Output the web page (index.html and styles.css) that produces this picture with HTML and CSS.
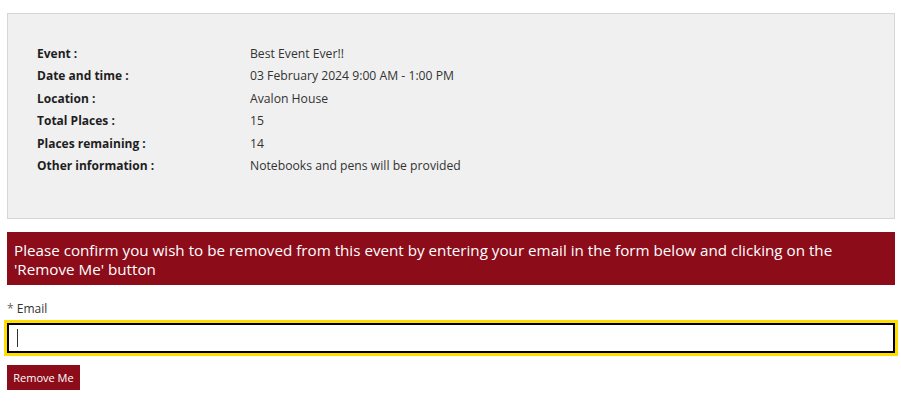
FILE: index.html
```html
<!DOCTYPE html>
<html lang="en">
<head>
<meta charset="utf-8">
<title>Remove from event</title>
<link rel="stylesheet" href="styles.css">
</head>
<body>
<div class="page">
  <div class="details">
    <div class="row"><span class="label">Event :</span><span class="value">Best Event Ever!!</span></div>
    <div class="row"><span class="label">Date and time :</span><span class="value">03 February 2024 9:00 AM - 1:00 PM</span></div>
    <div class="row"><span class="label">Location :</span><span class="value">Avalon House</span></div>
    <div class="row"><span class="label">Total Places :</span><span class="value">15</span></div>
    <div class="row"><span class="label">Places remaining :</span><span class="value">14</span></div>
    <div class="row"><span class="label">Other information :</span><span class="value">Notebooks and pens will be provided</span></div>
  </div>
  <div class="banner">Please confirm you wish to be removed from this event by entering your email in the form below and clicking on the 'Remove Me' button</div>
  <form class="form">
    <label class="field-label" for="email"><span class="req">*</span> Email</label>
    <div class="input-wrap"><input class="input" id="email" type="text" autofocus><span class="caret"></span></div>
    <div><button class="btn" type="button">Remove Me</button></div>
  </form>
</div>
</body>
</html>
```
FILE: styles.css
```css
* { box-sizing: border-box; }
body {
  margin: 0;
  font-family: "Open Sans", "Noto Sans", sans-serif;
  color: #333;
  background: #fff;
}
.page {
  padding: 13px 6px 0 7px;
}
.details {
  background: #f0f0f0;
  border: 1px solid #d6d6d6;
  padding: 29px 29px 42px 29px;
  height: 206px;
}
.row {
  display: flex;
  font-size: 12.2px;
  line-height: 22.4px;
}
.label {
  width: 213px;
  font-weight: 700;
  font-size: 12px;
  color: #1e1e1e;
}
.value {
  color: #333;
}
.banner {
  margin-top: 13px;
  background: #8d0c1a;
  color: #fff;
  font-size: 15.2px;
  line-height: 19px;
  padding: 9px 7px 6px 7px;
  height: 53px;
}
.form {
  display: flex;
  flex-direction: column;
}
.field-label {
  margin-top: 15px;
  font-size: 12px;
  line-height: 17px;
  color: #333;
}
.req { color: #666; }
.input-wrap {
  position: relative;
  margin-top: 6px;
}
.input {
  display: block;
  width: 100%;
  height: 30px;
  border: 2px solid #000;
  outline: 3px solid #ffdd00;
  outline-offset: 0;
  font-family: inherit;
  font-size: 13px;
  padding: 0 9px;
  background: #fff;
}
.caret {
  position: absolute;
  left: 10px;
  top: 6px;
  width: 1px;
  height: 18px;
  background: #333;
}
.btn {
  margin-top: 12px;
  background: #8d0c1a;
  color: #fff;
  border: 0;
  font-family: inherit;
  font-size: 11px;
  height: 25px;
  width: 73px;
  padding: 0;
  cursor: pointer;
}
```
